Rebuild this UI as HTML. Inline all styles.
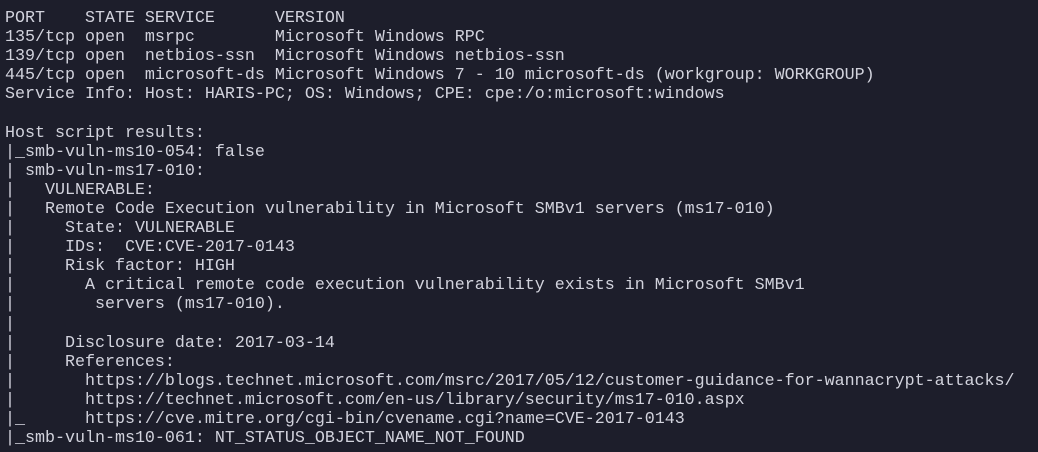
<!DOCTYPE html>
<html><head><meta charset="utf-8"><style>
html,body{margin:0;padding:0;background:#1d1e2b;width:1038px;height:452px;overflow:hidden}
pre{margin:0;position:absolute;left:5px;top:9px;font-family:"Liberation Mono","DejaVu Sans Mono",monospace;font-size:16.67px;line-height:19.1px;color:#d2d3dd;white-space:pre}
</style></head><body><pre>PORT    STATE SERVICE      VERSION
135/tcp open  msrpc        Microsoft Windows RPC
139/tcp open  netbios-ssn  Microsoft Windows netbios-ssn
445/tcp open  microsoft-ds Microsoft Windows 7 - 10 microsoft-ds (workgroup: WORKGROUP)
Service Info: Host: HARIS-PC; OS: Windows; CPE: cpe:/o:microsoft:windows

Host script results:
|_smb-vuln-ms10-054: false
| smb-vuln-ms17-010: 
|   VULNERABLE:
|   Remote Code Execution vulnerability in Microsoft SMBv1 servers (ms17-010)
|     State: VULNERABLE
|     IDs:  CVE:CVE-2017-0143
|     Risk factor: HIGH
|       A critical remote code execution vulnerability exists in Microsoft SMBv1
|        servers (ms17-010).
|           
|     Disclosure date: 2017-03-14
|     References:
|       https://blogs.technet.microsoft.com/msrc/2017/05/12/customer-guidance-for-wannacrypt-attacks/
|       https://technet.microsoft.com/en-us/library/security/ms17-010.aspx
|_      https://cve.mitre.org/cgi-bin/cvename.cgi?name=CVE-2017-0143
|_smb-vuln-ms10-061: NT_STATUS_OBJECT_NAME_NOT_FOUND</pre></body></html>
